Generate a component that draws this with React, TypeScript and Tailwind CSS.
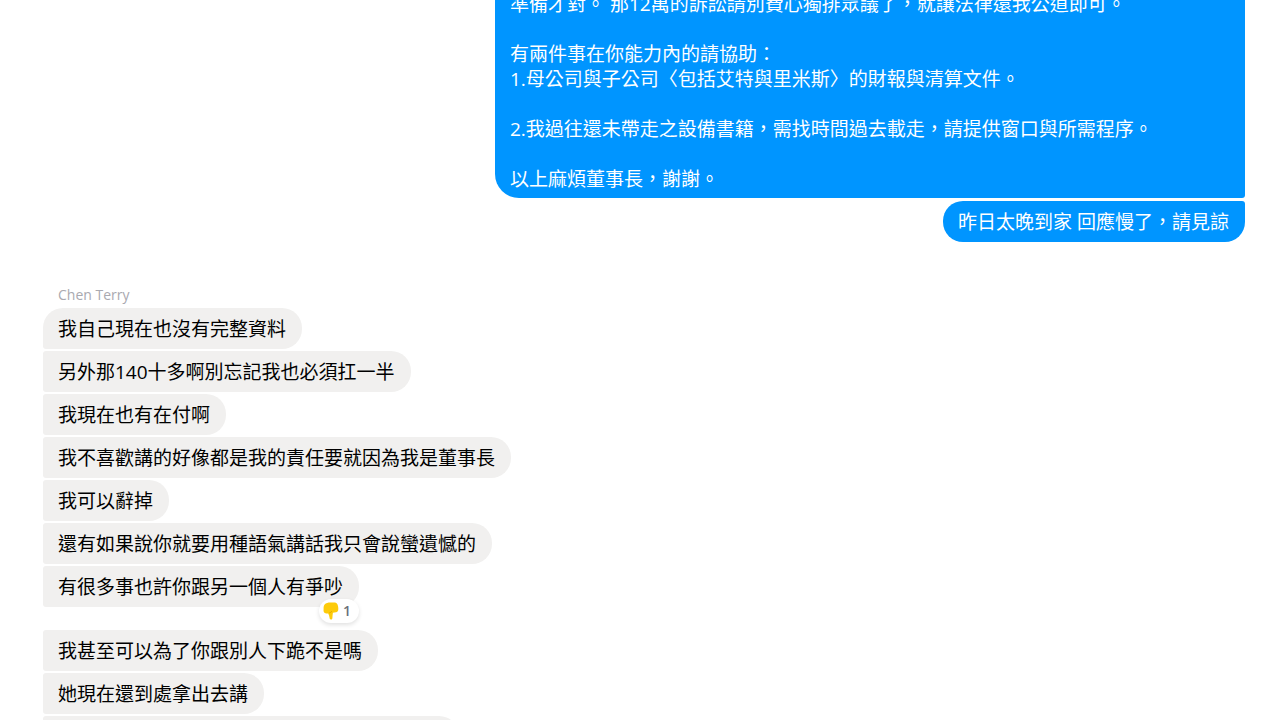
import React from "react";
import clsx from "clsx";

interface Message {
  text: string;
  first?: boolean;
  dislikes?: number;
}

const sentLines = [
  "準備才對。 那12萬的訴訟請別費心獨排眾議了，就讓法律還我公道即可。",
  "",
  "有兩件事在你能力內的請協助：",
  "1.母公司與子公司〈包括艾特與里米斯〉的財報與清算文件。",
  "",
  "2.我過往還未帶走之設備書籍，需找時間過去載走，請提供窗口與所需程序。",
  "",
  "以上麻煩董事長，謝謝。",
];

const received: Message[] = [
  { text: "我自己現在也沒有完整資料", first: true },
  { text: "另外那140十多啊別忘記我也必須扛一半" },
  { text: "我現在也有在付啊" },
  { text: "我不喜歡講的好像都是我的責任要就因為我是董事長" },
  { text: "我可以辭掉" },
  { text: "還有如果說你就要用種語氣講話我只會說蠻遺憾的" },
  { text: "有很多事也許你跟另一個人有爭吵", dislikes: 1 },
  { text: "我甚至可以為了你跟別人下跪不是嗎" },
  { text: "她現在還到處拿出去講" },
];

const ThumbsDown: React.FC = () => (
  <svg viewBox="0 0 16 18" className="h-[18px] w-4" aria-hidden="true">
    <path
      d="M1.6 2.6C3 1 5 .6 7.5.6h3.4c1.8 0 3 .5 3.500 1.600.7 1.400 1 3.300.9 5 0 1.600-.8 2.700-2.300 3l-3.100.5c-.4 1.600-.3 3.600-.5 5.300-.1 1.100-.7 1.700-1.500 1.600-.9-.1-1.300-.9-1.400-2-.2-1.500-.5-2.800-1.300-4.100-1.500.2-3.200 0-4-1C.4 9.700.5 8.300.6 7c-.1-1.700.1-3.300 1-4.400z"
      fill="#fdcb0a"
    />
    <path d="M6.200 11c1.300-.2 2.200-.9 2.700-2" fill="none" stroke="#e8ae00" strokeWidth="1" />
  </svg>
);

const ReceivedBubble: React.FC<{ message: Message }> = ({ message }) => (
  <li
    className={clsx(
      "relative rounded-l-[3px] rounded-r-[20px] bg-[#f1f0ef] pt-[9px] pr-4 pb-[7px] pl-[15px] text-black",
      message.first && "rounded-tl-[20px]",
      message.dislikes && "mb-[21px]"
    )}
  >
    {message.text}
    {message.dislikes && (
      <button
        type="button"
        aria-label="Reactions"
        className="absolute right-0 -bottom-4 flex h-6 items-center gap-1 rounded-full bg-white pr-2 pl-1 text-sm font-semibold text-[#6b7079] shadow-[0_2px_4px_rgba(0,0,0,0.12)]"
      >
        <ThumbsDown />
        {message.dislikes}
      </button>
    )}
  </li>
);

const App: React.FC = () => {
  return (
    <main className="h-screen overflow-hidden bg-white pr-5 pl-[43px] font-['Open_Sans','Noto_Sans_CJK_TC',sans-serif] text-[19px] leading-[25px]">
      <section className="flex flex-col items-end gap-[3px] text-white">
        {/* long message, scrolled partly out of view */}
        <div className="-mt-2 w-full max-w-[750px] rounded-r-[3px] rounded-bl-[24px] bg-[#0095ff] px-[15px] pb-[6px]">
          {sentLines.map((line, i) => (
            <p key={i} className="min-h-[25px]">
              {line}
            </p>
          ))}
        </div>
        <div className="rounded-l-[20px] rounded-tr-[3px] rounded-br-[20px] bg-[#0095ff] pt-[9px] pr-4 pb-[7px] pl-[15px]">
          昨日太晚到家 回應慢了，請見諒
        </div>
      </section>

      <section className="mt-[43px]">
        <h2 className="pb-[3px] pl-[15px] text-sm leading-5 text-[#a9a9b0]">Chen Terry</h2>
        <ul lang="zh-Hant" className="flex flex-col items-start gap-[2px]">
          {received.map((message) => (
            <ReceivedBubble key={message.text} message={message} />
          ))}
          <li className="h-[41px] w-[416px] rounded-l-[3px] rounded-r-[20px] bg-[#f1f0ef]"></li>
        </ul>
      </section>
    </main>
  );
};

export default App;
